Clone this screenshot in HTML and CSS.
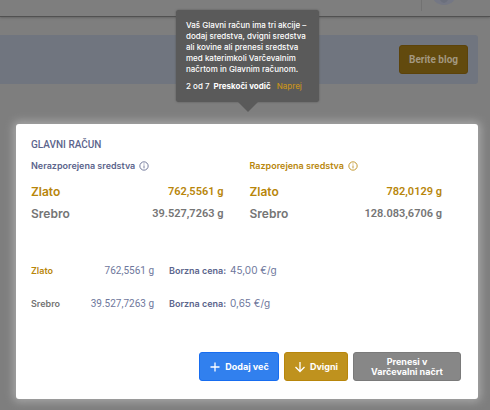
FILE: index.html
```html
<!DOCTYPE html>
<html lang="sl">
<head>
<meta charset="utf-8">
<meta name="viewport" content="width=device-width, initial-scale=1">
<title>Glavni račun</title>
<link rel="stylesheet" href="styles.css">
</head>
<body>
<header class="topbar">
  <span class="divider"></span>
  <span class="avatar"><span class="avatar-face"></span></span>
</header>
<main class="page">
  <section class="banner">
    <button class="btn blog" type="button">Berite blog</button>
  </section>
  <section class="card" aria-labelledby="account-title">
    <h1 id="account-title">GLAVNI RAČUN</h1>
    <div class="funds">
      <div>
        <h2>Nerazporejena sredstva
          <svg class="info" viewBox="0 0 12 12" aria-hidden="true"><circle cx="6" cy="6" r="5"/><path d="M6 5.3v3.5M6 3v1.2"/></svg>
        </h2>
        <table class="totals">
          <tr class="gold"><th scope="row">Zlato</th><td>762,5561 g</td></tr>
          <tr><th scope="row">Srebro</th><td>39.527,7263 g</td></tr>
        </table>
      </div>
      <div>
        <h2 class="gold">Razporejena sredstva
          <svg class="info" viewBox="0 0 12 12" aria-hidden="true"><circle cx="6" cy="6" r="5"/><path d="M6 5.3v3.5M6 3v1.2"/></svg>
        </h2>
        <table class="totals">
          <tr class="gold"><th scope="row">Zlato</th><td>782,0129 g</td></tr>
          <tr><th scope="row">Srebro</th><td>128.083,6706 g</td></tr>
        </table>
      </div>
    </div>
    <table class="prices">
      <tr><th scope="row" class="gold">Zlato</th><td class="amount">762,5561 g</td><td class="price"><b>Borzna cena:</b> 45,00 €/g</td></tr>
      <tr><th scope="row">Srebro</th><td class="amount">39.527,7263 g</td><td class="price"><b>Borzna cena:</b> 0,65 €/g</td></tr>
    </table>
    <div class="actions">
      <button class="btn add" type="button"><svg class="icon" viewBox="0 0 12 12" aria-hidden="true"><path d="M6 1.5v9M1.5 6h9"/></svg>Dodaj več</button>
      <button class="btn withdraw" type="button"><svg class="icon" viewBox="0 0 12 12" aria-hidden="true"><path d="M6 1v9.5M1.5 6 6 10.5 10.5 6"/></svg>Dvigni</button>
      <button class="btn transfer" type="button">Prenesi v<br>Varčevalni načrt</button>
    </div>
    <aside class="tooltip" role="dialog" aria-label="Vodič">
      <p>Vaš Glavni račun ima tri akcije –<br>dodaj sredstva, dvigni sredstva<br>ali kovine ali prenesi sredstva<br>med katerimkoli Varčevalnim<br>načrtom in Glavnim računom.</p>
      <div class="steps"><span>2 od 7</span><button class="skip" type="button">Preskoči vodič</button><button class="next" type="button">Naprej</button></div>
    </aside>
  </section>
</main>
</body>
</html>
```
FILE: styles.css
```css
* {
  box-sizing: border-box;
}

body {
  margin: 0;
  min-height: 100vh;
  background: #7e7e7e;
  color: #757575;
  font: 10px/14px Inter, "Liberation Sans", sans-serif;
}

h1, h2, p {
  margin: 0;
}

button {
  margin: 0;
  padding: 0;
  border: 0;
  background: none;
  color: inherit;
  font: inherit;
  cursor: pointer;
}

.topbar {
  display: flex;
  justify-content: flex-end;
  height: 17px;
  padding-right: 33px;
  border-bottom: 1px solid #515151;
  box-shadow: 0 1px 2px #666;
  overflow: hidden;
}

.divider {
  width: 1px;
  height: 11px;
  margin-right: 9px;
  background: #727272;
}

.avatar {
  width: 26px;
  height: 26px;
  margin-top: -21px;
  border-radius: 50%;
  background: #747784;
  overflow: hidden;
}

.avatar-face {
  display: block;
  width: 12px;
  height: 24px;
  margin: 0 auto;
  border-radius: 50%;
  background: #6b6f7c;
}

.page {
  padding: 18px 12px 11px 0;
}

.banner {
  display: flex;
  justify-content: flex-end;
  padding: 10px;
  border-radius: 0 3px 3px 0;
  background: #70757f;
}

.btn {
  display: flex;
  align-items: center;
  justify-content: center;
  gap: 4px;
  height: 29px;
  border-radius: 3px;
  color: #fff;
  font-size: 9px;
  line-height: 10px;
  font-weight: 700;
}

.blog {
  width: 69px;
  border: 1px solid #5c430a;
  background: #624a0e;
  color: #a39880;
  font-family: Roboto, sans-serif;
  font-size: 10px;
}

.card {
  position: relative;
  margin: 40px 0 0 16px;
  padding: 14px 17px 18px 15px;
  border-radius: 3px;
  background: #fff;
  box-shadow: 0 0 8px 3px #a6a6a6;
}

h1 {
  color: #5b648c;
  font-family: Roboto, sans-serif;
  font-size: 10px;
  line-height: 14px;
  font-weight: 500;
}

.funds {
  display: grid;
  grid-template-columns: 1fr 1fr;
  gap: 26px;
  padding: 7px 19px 0 0;
}

h2 {
  display: flex;
  align-items: center;
  gap: 4px;
  color: #5b648c;
  font-size: 9px;
  line-height: 14px;
  font-weight: 600;
  white-space: nowrap;
}

.info {
  width: 10px;
  height: 10px;
  fill: none;
  stroke: currentColor;
}

table {
  width: 100%;
  border-collapse: collapse;
}

th, td {
  padding: 0;
  white-space: nowrap;
}

th {
  text-align: left;
}

.totals {
  margin-top: 8px;
  font-size: 11px;
  line-height: 22px;
  font-weight: 600;
}

.totals th {
  font-size: 12px;
  font-weight: 600;
}

.totals td, .amount {
  font-family: Roboto, sans-serif;
  text-align: right;
}

.gold {
  color: #b8860b;
}

.prices {
  margin-top: 29px;
  color: #6e779c;
  line-height: 33px;
}

.prices th {
  width: 48px;
  color: #757575;
  font-size: 9px;
  font-weight: 600;
}

.prices .gold {
  color: #b8860b;
}

.prices .amount {
  width: 75px;
}

.price {
  padding-left: 15px;
}

.price b {
  margin-right: 1px;
  color: #5b648c;
  font-size: 9px;
  font-weight: 600;
}

.actions {
  display: flex;
  justify-content: flex-end;
  gap: 5px;
  margin-top: 32px;
}

.icon {
  width: 12px;
  height: 12px;
  fill: none;
  stroke: currentColor;
  stroke-width: 1.3;
}

.add {
  width: 80px;
  border: 1px solid #176df0;
  background: #3180ee;
}

.withdraw {
  width: 64px;
  border: 1px solid #b8860b;
  background: #bf921e;
}

.transfer {
  width: 108px;
  border: 1px solid #7a7a7a;
  background: #878787;
}

.tooltip {
  position: absolute;
  bottom: calc(100% + 22px);
  left: 50%;
  width: 143px;
  margin-left: -71px;
  padding: 10px 0 10px 10px;
  border-radius: 3px;
  background: #5a5a5a;
  box-shadow: 0 0 2px #505050;
  color: #fff;
  font-size: 8px;
  line-height: 11px;
  font-weight: 500;
  white-space: nowrap;
}

.tooltip::after {
  content: "";
  position: absolute;
  top: 100%;
  left: 50%;
  margin-left: -10px;
  border: 10px solid transparent;
  border-top-color: #5a5a5a;
  border-bottom: 0;
}

.steps {
  display: flex;
  gap: 4px;
  margin-top: 6px;
}

.skip {
  font-weight: 700;
}

.next {
  margin-left: 2px;
  color: #c6921c;
}
```
